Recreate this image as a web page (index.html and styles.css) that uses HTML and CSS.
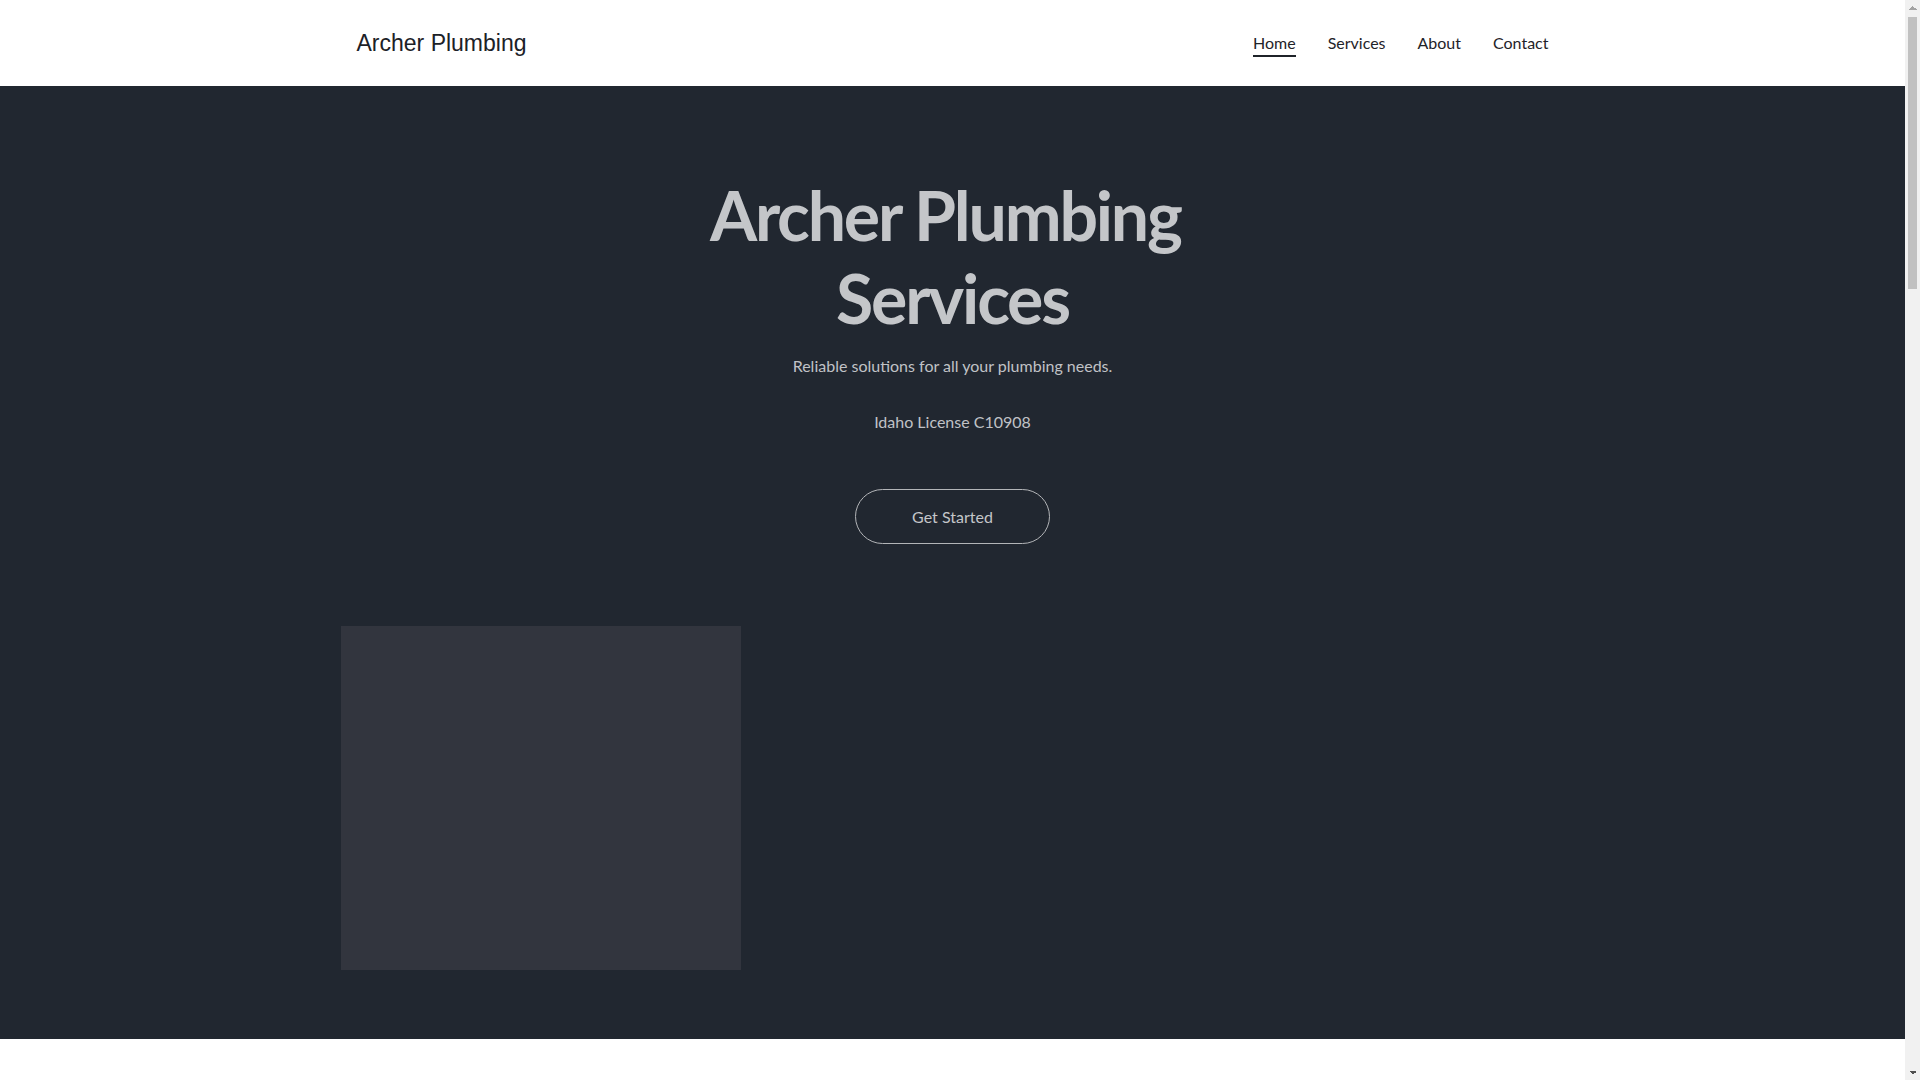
FILE: index.html
```html
<!DOCTYPE html>
<html lang="en">
<head>
<meta charset="utf-8">
<title>Archer Plumbing</title>
<link rel="stylesheet" href="styles.css">
</head>
<body>
<div class="page">
  <header class="site-header">
    <div class="container header-inner">
      <a class="logo" href="#">Archer Plumbing</a>
      <nav class="nav">
        <a class="nav-link active" href="#">Home</a>
        <a class="nav-link" href="#">Services</a>
        <a class="nav-link" href="#">About</a>
        <a class="nav-link" href="#">Contact</a>
      </nav>
    </div>
  </header>
  <main>
    <section class="hero">
      <div class="container hero-inner">
        <h1 class="hero-title">Archer Plumbing&nbsp;<br>Services</h1>
        <p class="hero-sub">Reliable solutions for all your plumbing needs.</p>
        <p class="hero-license">Idaho License C10908</p>
        <a class="btn" href="#">Get Started</a>
        <div class="hero-media"></div>
      </div>
    </section>
    <section class="after"></section>
  </main>
</div>
<div class="scrollbar" aria-hidden="true">
  <span class="sb-btn sb-up"></span>
  <span class="sb-track"><span class="sb-thumb"></span></span>
  <span class="sb-btn sb-down"></span>
</div>
</body>
</html>
```

FILE: styles.css
```css
* { box-sizing: border-box; }
html, body { margin: 0; padding: 0; }
body {
  font-family: Lato, "Open Sans", sans-serif;
  background: #ffffff;
  color: #1f2329;
  padding-right: 15px;
}
a { text-decoration: none; color: inherit; }

.container {
  width: 1224px;
  margin: 0 auto;
}

.site-header {
  height: 86px;
  background: #ffffff;
}
.header-inner {
  height: 100%;
  padding: 0 16px;
  display: flex;
  align-items: center;
  justify-content: space-between;
}
.logo {
  font-family: "Liberation Sans", Arial, sans-serif;
  font-size: 23px;
  color: #1c2127;
  line-height: 1.2;
  padding-top: 1px;
}
.nav {
  display: flex;
  gap: 32px;
}
.nav-link {
  font-size: 16px;
  line-height: 24px;
  color: #1f2329;
  display: inline-block;
  border-bottom: 2px solid transparent;
  padding-top: 1px;
}
.nav-link.active {
  border-bottom-color: #1f2329;
}

.hero {
  background: #212730;
  padding: 87px 0 69px;
}
.hero-inner {
  display: flex;
  flex-direction: column;
  align-items: center;
  text-align: center;
}
.hero-title {
  margin: 0;
  font-size: 68px;
  line-height: 83px;
  font-weight: 700;
  color: #c4c6c9;
  letter-spacing: -2.2px;
}
.hero-sub {
  margin: 15px 0 0;
  font-size: 16px;
  line-height: 24px;
  color: #c0c2c6;
}
.hero-license {
  margin: 32px 0 0;
  font-size: 16px;
  line-height: 24px;
  color: #c0c2c6;
}
.btn {
  margin-top: 55px;
  display: inline-block;
  padding: 15px 56px;
  font-size: 16px;
  line-height: 23px;
  color: #c4c6c9;
  border: 1px solid #b3b5b8;
  border-radius: 999px;
}
.hero-media {
  align-self: flex-start;
  margin-top: 82px;
  width: 400px;
  height: 344px;
  background: #32353e;
}

.after {
  height: 3100px;
  background: #ffffff;
}

/* browser scrollbar drawn over the page edge */
.scrollbar {
  position: fixed;
  top: 0;
  right: 0;
  width: 15px;
  height: 100vh;
  background: #f1f1f1;
  display: flex;
  flex-direction: column;
}
.sb-btn {
  flex: 0 0 15px;
  background-repeat: no-repeat;
  background-size: 4px 4px, 4px 4px;
}
.sb-up {
  background-image:
    linear-gradient(to top left, #a3a3a3 50%, transparent 50%),
    linear-gradient(to top right, #a3a3a3 50%, transparent 50%);
  background-position: 3.5px 5.5px, 7.5px 5.5px;
}
.sb-down {
  background-image:
    linear-gradient(to bottom left, #505050 50%, transparent 50%),
    linear-gradient(to bottom right, #505050 50%, transparent 50%);
  background-position: 3.5px 5.5px, 7.5px 5.5px;
}
.sb-track {
  flex: 1 1 auto;
  padding: 2px 3px 0;
}
.sb-thumb {
  display: block;
  height: 272px;
  background: #c1c1c1;
}
```
